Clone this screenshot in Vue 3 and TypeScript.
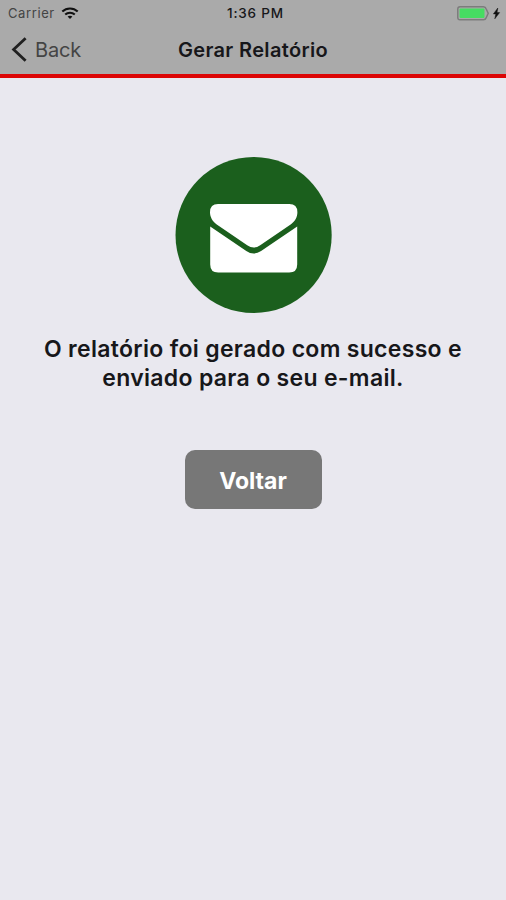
<script setup lang="ts">
import { ref } from 'vue'

const carrier = ref<string>('Carrier')
const time = ref<string>('1:36 PM')
const title = ref<string>('Gerar Relatório')
</script>

<template>
  <div class="screen">
    <header class="header">
      <div class="status">
        <div class="status-left">
          <span class="carrier">{{ carrier }}</span>
          <svg class="wifi" width="18" height="13" viewBox="0 0 18 13" fill="none" stroke="#111">
            <path d="M1.3 4.6C5.6 .5 12.4 .5 16.7 4.6" stroke-width="2.1" />
            <path d="M4.2 7.6C6.9 5.1 11.1 5.1 13.8 7.6" stroke-width="2" />
            <path d="M9 12.1 6.6 9.6C7.9 8.5 10.1 8.5 11.4 9.6Z" fill="#111" stroke="none" />
          </svg>
        </div>
        <span class="time">{{ time }}</span>
        <div class="status-right">
          <svg width="45" height="15" viewBox="0 0 45 15">
            <path d="M3 .8H26.5Q28.5 .8 29.2 3L31.2 7.3 29.2 11.8Q28.5 13.8 26.5 13.8H3Q.8 13.8 .8 11.6V3Q.8 .8 3 .8Z" fill="#aaa" stroke="#7c7c7c" stroke-width="1.5" />
            <rect x="2.5" y="2.6" width="25" height="9.3" rx=".8" fill="#46dc62" />
            <path d="M40.8 2 36.4 7.9H38.8L37.8 12.8 42.6 6.6H40Z" fill="#111" stroke="#111" stroke-width=".5" />
          </svg>
        </div>
      </div>
      <nav class="nav">
        <button class="back" type="button">
          <svg width="16" height="26" viewBox="0 0 16 26" fill="none" stroke="#202020" stroke-width="2.8">
            <path d="M14.6 1.2 2.6 12.5 14.6 23.8" />
          </svg>
          <span>Back</span>
        </button>
        <h1 class="title">{{ title }}</h1>
      </nav>
    </header>
    <main class="content">
      <svg class="mail" width="158" height="158" viewBox="0 0 158 158">
        <circle cx="79.6" cy="79" r="78.1" fill="#1b5f1d" />
        <path class="paper" d="M44 48H115.3Q123.4 48 123.4 56.3C123.4 61 121 65.6 117 68.2L86.2 89.3Q79.7 93.8 73.2 89.3L42.4 68.2C38.5 65.5 36 61 36 56.3Q36 48 44 48Z" />
        <path class="paper" d="M36.2 70.4 72.3 95Q79.7 100.1 87.1 95L123.2 70.4V108.4Q123.2 116.4 115.2 116.4H44.2Q36.2 116.4 36.2 108.4Z" />
      </svg>
      <p class="message">O relatório foi gerado com sucesso e<br />enviado para o seu e-mail.</p>
      <button class="return" type="button">Voltar</button>
    </main>
  </div>
</template>

<style>
body {
  margin: 0;
  background: #e9e8ef;
}
</style>

<style scoped>
.screen {
  min-height: 900px;
  background: #e9e8ef;
  color: #17171a;
  font-family: Inter, "Liberation Sans", sans-serif;
}
.header {
  box-sizing: border-box;
  height: 78px;
  background: #aaa;
  border-bottom: 4px solid #dc0505;
}
.status {
  display: grid;
  grid-template-columns: 1fr auto 1fr;
  align-items: center;
  height: 26px;
  padding: 0 4px 0 8px;
  font-size: 13px;
  line-height: 26px;
}
.status-left {
  display: flex;
  align-items: center;
  gap: 6px;
}
.carrier {
  color: #444;
  letter-spacing: 0.6px;
}
.time {
  padding-left: 1px;
  font-size: 13.5px;
  font-weight: 500;
  letter-spacing: 0.8px;
}
.status-right {
  display: flex;
  justify-content: flex-end;
}
.nav {
  display: grid;
  grid-template-columns: 1fr auto 1fr;
  align-items: center;
  height: 47px;
}
button {
  border: 0;
  font-family: inherit;
}
.back {
  display: flex;
  align-items: center;
  gap: 8px;
  padding: 0 0 0 11px;
  background: none;
  color: #444;
  font-size: 20px;
  letter-spacing: -0.2px;
}
.title {
  margin: 0;
  font-size: 20px;
  font-weight: 600;
  letter-spacing: 0.35px;
}
.content {
  display: flex;
  flex-direction: column;
  align-items: center;
  padding-top: 78px;
}
.paper {
  fill: #fff;
}
.message {
  margin: 21px 0 0;
  text-align: center;
  font-size: 23px;
  font-weight: 600;
  line-height: 29px;
  letter-spacing: 0.31px;
}
.return {
  width: 137px;
  height: 59px;
  margin-top: 57px;
  padding: 2px 0 0;
  border-radius: 10px;
  background: #777;
  color: #fff;
  font-size: 23px;
  font-weight: 700;
}
</style>
